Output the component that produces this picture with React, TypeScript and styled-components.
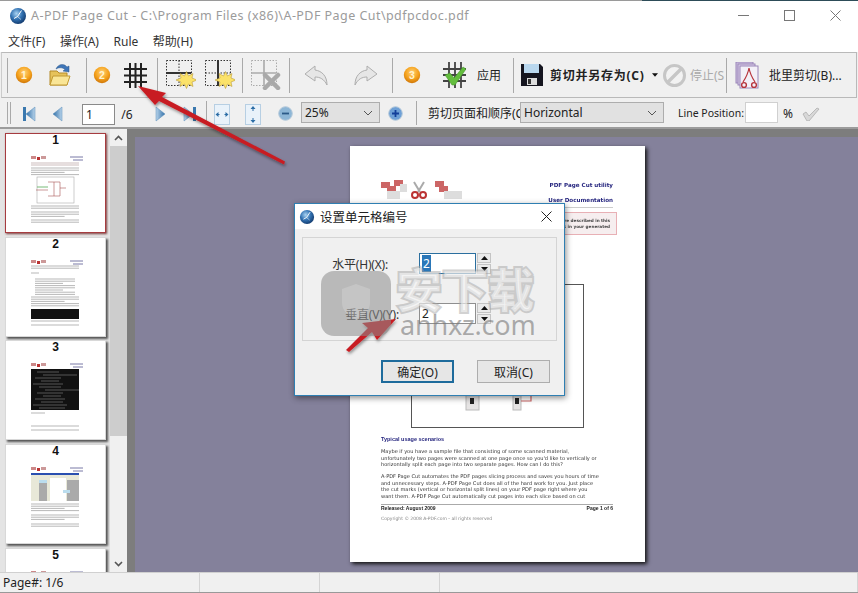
import React from "react";
import styled, { createGlobalStyle } from "styled-components";

const Global = createGlobalStyle`
  html, body { margin: 0; padding: 0; width: 858px; height: 593px; overflow: hidden; background: #fff; }
  * { box-sizing: border-box; }
  #root { width: 858px; height: 593px; }
`;
const UI = `"Noto Sans", "Noto Sans CJK SC", sans-serif`;
const Window = styled.div`
  position: relative; width: 858px; height: 593px; display: flex; flex-direction: column;
  background: #f0f0f0; font-family: ${UI}; color: #222; overflow: hidden;
  border-top: 1px solid #9a9a9a; border-image: linear-gradient(to right, #9a9a9a 642px, #2d4c58 642px) 1;
`;
const TitleBar = styled.div`
  height: 29px; flex: none; background: #fff; display: flex; align-items: center; padding-left: 9px;
`;
const Title = styled.div`
  margin-left: 4px; font-size: 12.5px; letter-spacing: 0.45px; color: #9b9b9b; white-space: nowrap; flex: 1;
`;
const WinButton = styled.div`
  width: 46px; height: 29px; display: flex; align-items: center; justify-content: center; flex: none;
`;
const MenuBar = styled.div`
  height: 22px; flex: none; background: #fff; display: flex; align-items: center; padding-left: 8px; gap: 14.6px;
  font-size: 12px; color: #333;
`;
const MainBar = styled.div`
  height: 46px; flex: none; margin: 0 1px 0 1px; background: #f0f0f0; border: 1px solid #b9b9b9; border-left-color: #ccc;
  display: flex; align-items: center; padding-left: 5px;
`;
const NavBar = styled.div`
  height: 31px; flex: none; background: #f0f0f0; border-bottom: 2px solid #9c9c9c; display: flex; align-items: center; padding-left: 7px;
`;
const Sep = styled.div<{ $h?: number }>`
  width: 1px; height: ${p => p.$h ?? 35}px; background: #a9a9a9; flex: none;
`;
const Slot = styled.div<{ $w: number; $start?: boolean; $drop?: number }>`
  width: ${p => p.$w}px; flex: none; display: flex; align-items: center; white-space: nowrap; overflow: hidden;
  justify-content: ${p => (p.$start ? "flex-start" : "center")};
  margin-top: ${p => p.$drop ?? 0}px;
`;
const ToolText = styled.span<{ $bold?: boolean; $off?: boolean }>`
  font-size: 12px; font-weight: ${p => (p.$bold ? 700 : 400)}; color: ${p => (p.$off ? "#aaa" : "#222")};
  letter-spacing: ${p => (p.$bold ? "0.75px" : "0")};
`;
const PageInput = styled.div`
  width: 33px; height: 21px; margin-top: 3px; background: #fff; border: 1px solid #8a8a8a; font-size: 12px; line-height: 19px; padding-left: 3px; flex: none;
`;
const Combo = styled.div<{ $w: number }>`
  width: ${p => p.$w}px; height: 21px; background: #e1e1e1; border: 1px solid #adadad; display: flex; align-items: center;
  justify-content: space-between; padding: 0 6px 0 3px; font-size: 12px; flex: none; color: #222;
`;
const NavText = styled.span<{ $small?: boolean }>`
  font-size: ${p => (p.$small ? "10.5px" : "12px")}; color: #222; white-space: nowrap;
`;
const LineInput = styled.div`
  width: 33px; height: 21px; background: #fff; border: 1px solid #d0d0d0; flex: none;
`;
const Body = styled.div`
  flex: 1; min-height: 0; display: flex;
`;
const ThumbPanel = styled.div`
  width: 127px; flex: none; display: flex;
`;
const ThumbList = styled.div`
  width: 110px; flex: none; background: #e4e4e4; overflow: hidden; padding: 4px 0 0 5px; display: flex; flex-direction: column; gap: 3.7px;
`;
const ThumbCard = styled.div<{ $active?: boolean }>`
  width: 101px; height: 100px; flex: none; background: #fff; border: ${p => (p.$active ? "1px solid #a63c40" : "1px solid #d8d8d8")};
  box-shadow: ${p => (p.$active ? "1px 1px 2px #7a3b3b" : "2px 2px 2px #555")};
  display: flex; flex-direction: column; align-items: center;
`;
const ThumbNum = styled.div`
  font: 700 12px/13px "Liberation Sans", sans-serif; color: #111; height: 14px;
`;
const ScrollBar = styled.div`
  width: 17px; flex: none; background: #f0f0f0; display: flex; flex-direction: column; align-items: center; justify-content: space-between;
`;
const ScrollBtn = styled.div`
  height: 17px; width: 17px; display: flex; align-items: center; justify-content: center; flex: none;
`;
const ScrollTrack = styled.div`
  flex: 1; width: 17px; padding-bottom: 119px; display: flex;
`;
const ScrollThumb = styled.div`
  flex: 1; background: #cdcdcd;
`;
const CanvasFrame = styled.div`
  flex: 1; background: #7d7d7d; padding: 8px 0 0 8px; display: flex; min-width: 0;
`;
const Canvas = styled.div`
  flex: 1; background: #84819b; display: flex; justify-content: flex-start; padding: 9px 0 0 215px; overflow: hidden;
`;
const Page = styled.div`
  width: 295px; height: 416px; background: #fff; box-shadow: 2px 2px 4px #111; flex: none; padding: 32px 32px 0 31px;
  font-family: "DejaVu Sans", sans-serif; color: #444; filter: blur(0.3px);
`;
const PageHead = styled.div`
  display: flex; justify-content: space-between; height: 30px; border-bottom: 1px solid #ccc; align-items: flex-start;
`;
const HeadRight = styled.div`
  text-align: right; font-size: 5.6px; font-weight: 700; color: #26267f; line-height: 15px;
`;
const NoteBox = styled.div`
  margin: 4px -4px 0 0; height: 23px; border: 1px solid #e8b0b5; background: #f6eeef; font-size: 4.2px; font-weight: 700; line-height: 6px; padding: 5px 6px 0 4px; text-align: right;
`;
const Para = styled.p<{ $top?: number }>`
  margin: ${p => p.$top ?? 6}px 0 0; font-size: 5.05px; line-height: 6.4px; color: #333; white-space: nowrap;
`;
const DiagramBox = styled.div`
  width: 173px; height: 144px; margin: 11px 0 0 30px; border: 1px solid #555; display: flex; align-items: flex-end; justify-content: center;
`;
const SubHead = styled.div`
  margin-top: 7px; font: 700 5.5px/8px "Liberation Sans", sans-serif; color: #26267f;
`;
const PageFoot = styled.div`
  margin-top: 5px; border-top: 1px solid #aaa; display: flex; justify-content: space-between; font: 700 5px/7px "Liberation Sans", sans-serif; color: #222;
`;
const Copyright = styled.div`
  font-size: 4.5px; color: #888; line-height: 7px; margin-top: 3px;
`;
const StatusBar = styled.div`
  height: 21px; flex: none; background: #f0f0f0; border-top: 1px solid #d0d0d0; border-bottom: 1px solid #999; display: flex; font-size: 12px; color: #222; align-items: stretch;
`;
const StatusCell = styled.div<{ $w?: number }>`
  width: ${p => (p.$w ? `${p.$w}px` : "auto")}; flex: ${p => (p.$w ? "none" : 1)}; border-right: 1px solid #d4d4d4; padding-left: 3px; line-height: 19px; white-space: nowrap;
`;
const Dialog = styled.div`
  position: absolute; left: 294px; top: 202px; width: 271px; height: 193px; background: #f0f0f0; border: 1px solid #2f7fb2;
  box-shadow: 1px 2px 6px rgba(0,0,0,.45); display: flex; flex-direction: column;
`;
const DialogHead = styled.div`
  height: 25px; flex: none; background: #fff; display: flex; align-items: center; padding-left: 4px; font-size: 12.5px; color: #222; gap: 5px;
`;
const DialogTitle = styled.div`
  flex: 1;
`;
const DialogClose = styled.div`
  width: 30px; display: flex; justify-content: center; margin-right: 3px;
`;
const GroupBox = styled.div`
  margin: 8px 7px 0 7px; height: 104px; border: 1px solid #d4d4d4; padding-top: 15px; display: flex; flex-direction: column; gap: 29px;
`;
const FieldRow = styled.div`
  display: flex; align-items: center; height: 21px;
`;
const FieldLabel = styled.div<{ $w: number }>`
  width: ${p => p.$w}px; text-align: right; font-size: 12px; color: #333; flex: none; letter-spacing: -0.2px;
`;
const FieldInput = styled.div<{ $focus?: boolean; $gap: number }>`
  margin-left: ${p => p.$gap}px; width: 57px; height: 21px; background: #fff; border: 1px solid ${p => (p.$focus ? "#2b6f9f" : "#8f8f8f")};
  font-size: 12px; line-height: 19px; padding-left: 2px; flex: none;
`;
const Selected = styled.span`
  background: #2a77b8; color: #fff; display: inline-block; height: 17px; line-height: 17px; padding: 0 1px;
`;
const Spin = styled.div`
  margin-left: 1px; display: flex; flex-direction: column; gap: 1px; width: 14px;
`;
const SpinBtn = styled.div`
  height: 10px; background: #eaeaea; border: 1px solid #c4c4c4; display: flex; align-items: center; justify-content: center;
`;
const DialogFoot = styled.div`
  display: flex; gap: 23px; padding: 19px 0 0 86px;
`;
const DlgButton = styled.div<{ $primary?: boolean }>`
  width: 73px; height: 23px; background: #e6e6e6; border: ${p => (p.$primary ? "2px solid #1e6b9c" : "1px solid #adadad")};
  display: flex; align-items: center; justify-content: center; font-size: 12px; color: #222;
`;
const Overlay = styled.svg`
  position: absolute; left: 0; top: 0; pointer-events: none;
`;
const Watermark = styled.div`
  position: absolute; left: 396px; top: 258px; font: 700 46px/56px "Noto Sans CJK SC", sans-serif; color: rgba(246,246,246,.62);
  -webkit-text-stroke: 4px rgba(165,165,165,.5); paint-order: stroke fill; white-space: nowrap; pointer-events: none;
`;
const WatermarkSub = styled.div`
  position: absolute; left: 400px; top: 309px; font: 400 27px/30px "Noto Sans", sans-serif; letter-spacing: -0.2px; color: rgba(120,120,120,.6); white-space: nowrap; pointer-events: none;
`;

const Logo = ({ s = 18 }: { s?: number }) => (
  <svg width={s} height={s} viewBox="0 0 18 18">
    <defs><radialGradient id="lg" cx="40%" cy="35%" r="70%"><stop offset="0" stopColor="#a9d3f2" /><stop offset=".5" stopColor="#3474b4" /><stop offset="1" stopColor="#0f3568" /></radialGradient></defs>
    <circle cx="9" cy="9" r="8" fill="url(#lg)" />
    <path d="M12.500 3.500 L8.500 9.500 L5 11.500" stroke="#fff" strokeWidth="1" fill="none" />
    <path d="M8.500 9.500l3.500 3" stroke="#fff" strokeWidth=".6" fill="none" />
  </svg>
);
const Badge = ({ n, id }: { n: number; id: string }) => (
  <svg width="18" height="18" viewBox="0 0 18 18">
    <defs><radialGradient id={id} cx="50%" cy="35%" r="70%"><stop offset="0" stopColor="#ffd27a" /><stop offset=".55" stopColor="#f5a21d" /><stop offset="1" stopColor="#c96f05" /></radialGradient></defs>
    <circle cx="9" cy="9" r="8.2" fill={`url(#${id})`} />
    <text x="9" y="12.600" textAnchor="middle" fontSize="10.500" fontWeight="700" fill="#fff3d0" fontFamily="Liberation Sans">{n}</text>
  </svg>
);
const Folder = () => (
  <svg width="22" height="24" viewBox="0 0 22 24">
    <path d="M1 8h7l2 2h8v12H1z" fill="#e6c25a" stroke="#b58b28" />
    <path d="M1 22l3-9h17l-3 9z" fill="#f9e596" stroke="#c29a32" />
    <path d="M7 6C9 1 15 0 18 4l2-1v6l-6-1 2-1.500C14 4.500 10 4 7 6z" fill="#3f76b8" stroke="#2c5688" strokeWidth=".5" />
  </svg>
);
const GridIcon = ({ c = "#222" }: { c?: string }) => (
  <svg width="23" height="25" viewBox="0 0 23 25" stroke={c} strokeWidth="2">
    <path d="M6 0v25M11.500 0v25M17 0v25M0 6h23M0 12.500h23M0 19h23" />
  </svg>
);
const Star = ({ x, y }: { x: number; y: number }) => (
  <path transform={`translate(${x} ${y})`} d="M0-9l2 4.500 4.500-2.500-1 4.500 5 2-5 2 1 4.500-4.500-2.500-2 4.500-2-4.500-4.500 2.500 1-4.500-5-2 5-2-1-4.500 4.500 2.500z" fill="#fbe26a" stroke="#b08f24" strokeWidth=".5" />
);
const SplitIcon = ({ v }: { v?: boolean }) => (
  <svg width="30" height="30" viewBox="0 0 30 30">
    <rect x=".5" y=".5" width="25" height="25" fill="none" stroke="#333" strokeDasharray="1.500 1.500" />
    <path d="M13 .5v25M.5 13h25" stroke="#333" strokeDasharray="1.500 1.500" fill="none" />
    <path d={v ? "M13 0v26" : "M0 13h25"} stroke="#333" strokeWidth="2" />
    <Star x={20.500} y={20.500} />
  </svg>
);
const DeleteIcon = () => (
  <svg width="30" height="30" viewBox="0 0 30 30">
    <rect x=".5" y=".5" width="25" height="25" fill="none" stroke="#aaa" strokeDasharray="1.500 1.500" />
    <path d="M13 0v26M0 13h25" stroke="#aaa" strokeWidth="1.600" />
    <path d="M14 15l13 13M27 15L14 28" stroke="#a9a9a9" strokeWidth="4.500" strokeLinecap="round" />
  </svg>
);
const UndoIcon = ({ flip }: { flip?: boolean }) => (
  <svg width="25" height="21" viewBox="0 0 25 21" style={flip ? { transform: "scaleX(-1)" } : undefined}>
    <path d="M11 1L1 9l10 7v-4c5 0 9 2 12 8 0-9-5-14-12-15z" fill="#e6e6e6" stroke="#aeaeae" />
  </svg>
);
const ApplyIcon = () => (
  <svg width="23" height="26" viewBox="0 0 23 26">
    <path d="M6 0v26M12 0v26M18 0v26M0 7h23M0 13h23M0 19h23" stroke="#444" strokeWidth="1.800" />
    <path d="M2 13l5-2 4 5 9-11 3 2-11 16h-3z" fill="#63bd3d" stroke="#3d8f25" strokeWidth=".5" />
  </svg>
);
const SaveIcon = () => (
  <svg width="22" height="22" viewBox="0 0 22 22">
    <path d="M0 0h19l3 3v19H0z" fill="#15151f" />
    <rect x="3" y="0" width="15" height="9" fill="#b9d7ee" />
    <rect x="6" y="14" width="10" height="7" fill="#ddd" />
    <rect x="7" y="15" width="3" height="5" fill="#333" />
  </svg>
);
const StopIcon = () => (
  <svg width="23" height="23" viewBox="0 0 23 23">
    <circle cx="11.500" cy="11.500" r="10" fill="#f2f2f2" stroke="#c6c6c6" strokeWidth="3" />
    <path d="M5 18L18 5" stroke="#c6c6c6" strokeWidth="3.400" />
  </svg>
);
const BatchIcon = () => (
  <svg width="27" height="27" viewBox="0 0 27 27">
    <rect x="1" y="0" width="17" height="21" fill="#cdbfe0" stroke="#9a86b8" />
    <rect x="3" y="2" width="17" height="21" fill="#dcd0ea" stroke="#9a86b8" />
    <rect x="5" y="4" width="18" height="22" fill="#f3f0f8" stroke="#9a86b8" />
    <path d="M14 6c-1 6-4 11-6 14M14 6c1 6 4 11 6 14" stroke="#b7333b" strokeWidth="1.200" fill="none" />
    <circle cx="9" cy="23" r="2.400" fill="none" stroke="#b7333b" strokeWidth="1.400" />
    <circle cx="19" cy="23" r="2.400" fill="none" stroke="#b7333b" strokeWidth="1.400" />
  </svg>
);
const NavArrow = ({ dir, bar }: { dir: "l" | "r"; bar?: boolean }) => (
  <svg width="16" height="16" viewBox="0 0 16 16" style={dir === "r" ? { transform: "scaleX(-1)" } : undefined}>
    <defs><linearGradient id={`na${bar ? 1 : 0}`} x1="0" x2="1"><stop offset="0" stopColor="#2f6fa8" /><stop offset="1" stopColor="#b8d3ea" /></linearGradient></defs>
    {bar && <rect x="1" y="1" width="3" height="14" fill="#3a78ae" />}
    <path d="M13 1L4 8l9 7z" fill={`url(#na${bar ? 1 : 0})`} stroke="#5b8db8" strokeWidth=".5" />
  </svg>
);
const FitIcon = ({ v }: { v?: boolean }) => (
  <svg width="16" height="21" viewBox="0 0 16 21">
    <rect x=".5" y=".5" width="15" height="20" fill="#e9f2fa" stroke="#b7cfe3" />
    {v
      ? <path d="M8 2l-2.500 3h2v2h1V5h2zM8 19l-2.500-3h2v-2h1v2h2z" fill="#2c6da6" />
      : <path d="M1.500 10.500l3-2.500v2h1v1h-1v2zM14.500 10.500l-3-2.500v2h-1v1h1v2z" fill="#2c6da6" />}
  </svg>
);
const ZoomBtn = ({ plus }: { plus?: boolean }) => (
  <svg width="15" height="15" viewBox="0 0 15 15">
    <circle cx="7.500" cy="7.500" r="6.800" fill={plus ? "#6ea0d6" : "#8db6d6"} stroke="#b5c9da" />
    <path d={plus ? "M4 7.500h7M7.500 4v7" : "M4 7.500h7"} stroke={plus ? "#123f9a" : "#2c5a88"} strokeWidth="1.800" />
  </svg>
);
const Chevron = () => (
  <svg width="10" height="6" viewBox="0 0 10 6"><path d="M1 1l4 4 4-4" fill="none" stroke="#555" /></svg>
);
const ScrollChevron = ({ up }: { up?: boolean }) => (
  <svg width="9" height="6" viewBox="0 0 9 6"><path d={up ? "M1 5l3.500-3.500L8 5" : "M1 1l3.500 3.500L8 1"} fill="none" stroke="#555" strokeWidth="1.600" /></svg>
);
const Tri = ({ up }: { up?: boolean }) => (
  <svg width="7" height="4" viewBox="0 0 7 4"><path d={up ? "M0 4l3.500-4L7 4z" : "M0 0l3.500 4L7 0z"} fill="#111" /></svg>
);
const Check = () => (
  <svg width="18" height="14" viewBox="0 0 18 14"><path d="M1 7l3-2 3 4 8-8 2 1-10 12h-2z" fill="#d8d8d8" stroke="#a8a8a8" strokeWidth=".7" /></svg>
);
const Lines = ({ y, n, x = 16, w = 48 }: { y: number; n: number; x?: number; w?: number }) => (
  <g stroke="#9a9a9a" strokeWidth=".7">
    {Array.from({ length: n }, (_, i) => <path key={i} d={`M${x} ${y + i * 2.2}h${i % 3 === 2 ? w * 0.7 : w}`} />)}
  </g>
);
const ThumbArt = ({ k }: { k: number }) => (
  <svg width="99" height="84" viewBox="0 0 99 84">
    <g transform="translate(9 1)">
      <rect x="16" y="7" width="5" height="3" fill="#c88" /><rect x="22" y="8" width="3" height="3" fill="#b33" /><rect x="26" y="7" width="5" height="3" fill="#c99" />
      <path d="M55 8h13M58 11h10" stroke="#55558f" strokeWidth=".8" />
      {k === 1 && <>
        <rect x="16" y="13" width="48" height="4" fill="#e6dede" /><Lines y={19} n={4} />
        <rect x="22" y="28" width="37" height="26" fill="none" stroke="#aaa" strokeWidth=".6" />
        <path d="M33 33h12v14H33M39 33v14M45 39h6M21 41h12" stroke="#a55" strokeWidth=".6" fill="none" />
        <path d="M22 38h11" stroke="#5a5" strokeWidth=".8" /><Lines y={57} n={2} /><Lines y={63} n={3} /><Lines y={71} n={2} />
      </>}
      {k === 2 && <>
        <Lines y={13} n={2} /><Lines y={20} n={1} w={8} /><Lines y={26} n={8} x={20} w={40} /><Lines y={44} n={5} />
        <rect x="16" y="56" width="48" height="10" fill="#111" /><Lines y={68} n={1} /><Lines y={72} n={1} />
      </>}
      {k === 3 && <>
        <rect x="16" y="13" width="48" height="41" fill="#111" /><g stroke="#888" strokeWidth=".6">{[16,19,22,25,28,31,34,37,40,43,46,49,52].map(y => <path key={y} d={`M${18 + (y % 7) * 2} ${y}h${18 + (y % 5) * 4}`} />)}</g>
        <Lines y={57} n={1} w={14} /><Lines y={70} n={1} /><Lines y={74} n={1} />
      </>}
      {k === 4 && <>
        <rect x="16" y="13" width="48" height="2" fill="#2a4fb0" /><rect x="16" y="15" width="48" height="26" fill="#e8e8d8" />
        <rect x="24" y="20" width="8" height="21" fill="#aaa" /><rect x="35" y="18" width="16" height="23" fill="#fff" /><rect x="52" y="20" width="12" height="21" fill="#aaa" />
        <rect x="24" y="20" width="8" height="3" fill="#bde" /><rect x="48" y="30" width="7" height="3" fill="#bde" />
        <Lines y={44} n={4} /><Lines y={55} n={3} /><Lines y={64} n={2} />
      </>}
    </g>
  </svg>
);
const Thumb = ({ n }: { n: number }) => (
  <ThumbCard $active={n === 1}>
    <ThumbNum>{n}</ThumbNum>
    <ThumbArt k={n} />
  </ThumbCard>
);
const DocLogo = () => (
  <svg width="84" height="22" viewBox="0 0 84 22">
    <rect x="0" y="4" width="9" height="6" fill="#c66" /><rect x="6" y="8" width="9" height="6" fill="#c66" /><rect x="13" y="2" width="9" height="6" fill="#c66" />
    <rect x="6" y="13" width="13" height="8" fill="#ddd" /><rect x="19" y="6" width="7" height="8" fill="#ddd" />
    <path d="M33 4l6 10M43 4l-6 10" stroke="#aaa" strokeWidth="2" /><circle cx="34" cy="17" r="3" fill="none" stroke="#b33" strokeWidth="2" /><circle cx="42" cy="17" r="3" fill="none" stroke="#b33" strokeWidth="2" />
    <rect x="54" y="3" width="9" height="6" fill="#c66" /><rect x="58" y="8" width="9" height="6" fill="#c66" /><rect x="63" y="13" width="18" height="8" fill="#ddd" />
  </svg>
);
const DiagramArt = () => (
  <svg width="171" height="34" viewBox="0 0 171 34">
    <rect x="54" y="0" width="13" height="17" fill="#e6e4e4" stroke="#bbb" /><rect x="58" y="5" width="4" height="6" fill="#222" />
    <rect x="101" y="0" width="8" height="17" fill="#e6e4e4" stroke="#bbb" /><rect x="103" y="5" width="4" height="6" fill="#222" />
    <path d="M109 8h10V0" stroke="#c66" strokeWidth="1.200" fill="none" />
  </svg>
);

export default function App() {
  return (
    <Window>
      <Global />
      <TitleBar>
        <Logo />
        <Title>A-PDF Page Cut - C:\Program Files (x86)\A-PDF Page Cut\pdfpcdoc.pdf</Title>
        <WinButton><svg width="11" height="11"><path d="M0 5.500h11" stroke="#777" /></svg></WinButton>
        <WinButton><svg width="11" height="11"><rect x=".5" y=".5" width="10" height="10" fill="none" stroke="#777" /></svg></WinButton>
        <WinButton><svg width="11" height="11"><path d="M.5 .5l10 10M10.500 .5l-10 10" stroke="#777" /></svg></WinButton>
      </TitleBar>
      <MenuBar><span>文件(F)</span><span>操作(A)</span><span>Rule</span><span>帮助(H)</span></MenuBar>
      <MainBar>
        <Sep />
        <Slot $w={32}><Badge n={1} id="b1" /></Slot>
        <Slot $w={40}><Folder /></Slot>
        <Slot $w={6} />
        <Sep />
        <Slot $w={30}><Badge n={2} id="b2" /></Slot>
        <Slot $w={36}><GridIcon /></Slot>
        <Slot $w={4} />
        <Sep />
        <Slot $w={46}><SplitIcon /></Slot>
        <Slot $w={31}><SplitIcon v /></Slot>
        <Slot $w={7} />
        <Sep />
        <Slot $w={46}><DeleteIcon /></Slot>
        <Sep />
        <Slot $w={52}><UndoIcon /></Slot>
        <Slot $w={46}><UndoIcon flip /></Slot>
        <Slot $w={4} />
        <Sep />
        <Slot $w={38}><Badge n={3} id="b3" /></Slot>
        <Slot $w={46}><ApplyIcon /></Slot>
        <Slot $w={36} $start><ToolText>应用</ToolText></Slot>
        <Sep />
        <Slot $w={36}><SaveIcon /></Slot>
        <Slot $w={102} $start><ToolText $bold>剪切并另存为(C)</ToolText></Slot>
        <Slot $w={6}><Tri /></Slot>
        <Slot $w={32}><StopIcon /></Slot>
        <Slot $w={36} $start><ToolText $off>停止(S</ToolText></Slot>
        <Sep />
        <Slot $w={42}><BatchIcon /></Slot>
        <Slot $w={80} $start><ToolText>批里剪切(B)...</ToolText></Slot>
      </MainBar>
      <NavBar>
        <Sep $h={22} />
        <Slot $w={2} />
        <Sep $h={22} />
        <Slot $w={38} $drop={3}><NavArrow dir="l" bar /></Slot>
        <Slot $w={16} $drop={3}><NavArrow dir="l" /></Slot>
        <Slot $w={17} />
        <PageInput>1</PageInput>
        <Slot $w={30} $start $drop={3}><NavText>&nbsp;&nbsp;/6</NavText></Slot>
        <Slot $w={32} $drop={3}><NavArrow dir="r" /></Slot>
        <Slot $w={24} $drop={3}><NavArrow dir="r" bar /></Slot>
        <Slot $w={5} />
        <Sep $h={24} />
        <Slot $w={30} $drop={3}><FitIcon /></Slot>
        <Slot $w={32} $drop={3}><FitIcon v /></Slot>
        <Slot $w={32} $drop={1}><ZoomBtn /></Slot>
        <Combo $w={79}><span>25%</span><Chevron /></Combo>
        <Slot $w={30} $drop={1}><ZoomBtn plus /></Slot>
        <Slot $w={6} />
        <Sep $h={24} />
        <Slot $w={11} />
        <Slot $w={92} $start $drop={1}><NavText>剪切页面和顺序(C</NavText></Slot>
        <Combo $w={144}><span>Horizontal</span><Chevron /></Combo>
        <Slot $w={14} />
        <Slot $w={67} $start><NavText $small>Line Position:</NavText></Slot>
        <LineInput />
        <Slot $w={20} $drop={2}><NavText>%</NavText></Slot>
        <Slot $w={26} $drop={2}><Check /></Slot>
      </NavBar>
      <Body>
        <ThumbPanel>
          <ThumbList>{[1, 2, 3, 4, 5].map(n => <Thumb key={n} n={n} />)}</ThumbList>
          <ScrollBar>
            <ScrollBtn><ScrollChevron up /></ScrollBtn>
            <ScrollTrack><ScrollThumb /></ScrollTrack>
            <ScrollBtn><ScrollChevron /></ScrollBtn>
          </ScrollBar>
        </ThumbPanel>
        <CanvasFrame>
          <Canvas>
            <Page>
              <PageHead>
                <DocLogo />
                <HeadRight>PDF Page Cut utility<br />User Documentation</HeadRight>
              </PageHead>
              <NoteBox>Some of the features that are described in this<br />document may not work in your generated</NoteBox>
              <Para $top={19}>A-PDF Page Cut is a simple and lightweight utility that lets you cut or<br />split pages of PDF documents with horizontal and vertical cut marks<br />that are placed on the page quickly and conveniently</Para>
              <DiagramBox><DiagramArt /></DiagramBox>
              <SubHead>Typical usage scenarios</SubHead>
              <Para $top={5}>Maybe if you have a sample file that consisting of some scanned material,<br />unfortunately two pages were scanned at one page once so you'd like to vertically or<br />horizontally split each page into two separate pages. How can I do this?</Para>
              <Para>A-PDF Page Cut automates the PDF pages slicing process and saves you hours of time<br />and unnecessary steps. A-PDF Page Cut does all of the hard work for you. Just place<br />the cut marks (vertical or horizontal split lines) on your PDF page right where you<br />want them. A-PDF Page Cut automatically cut pages into each slice based on cut</Para>
              <PageFoot><span>Released: August 2009</span><span>Page 1 of 6</span></PageFoot>
              <Copyright>Copyright © 2008 A-PDF.com - all rights reserved</Copyright>
            </Page>
          </Canvas>
        </CanvasFrame>
      </Body>
      <StatusBar>
        <StatusCell $w={200}>Page#: 1/6</StatusCell>
        <StatusCell $w={120} />
        <StatusCell $w={120} />
        <StatusCell />
      </StatusBar>
      <Dialog>
        <DialogHead>
          <Logo s={16} />
          <DialogTitle>设置单元格编号</DialogTitle>
          <DialogClose><svg width="11" height="11"><path d="M.5 .5l10 10M10.500 .5l-10 10" stroke="#222" /></svg></DialogClose>
        </DialogHead>
        <GroupBox>
          <FieldRow>
            <FieldLabel $w={85}>水平(H)(X):</FieldLabel>
            <FieldInput $focus $gap={31}><Selected>2</Selected></FieldInput>
            <Spin><SpinBtn><Tri up /></SpinBtn><SpinBtn><Tri /></SpinBtn></Spin>
          </FieldRow>
          <FieldRow>
            <FieldLabel $w={96}>垂直(V)(Y):</FieldLabel>
            <FieldInput $gap={20}>2</FieldInput>
            <Spin><SpinBtn><Tri up /></SpinBtn><SpinBtn><Tri /></SpinBtn></Spin>
          </FieldRow>
        </GroupBox>
        <DialogFoot>
          <DlgButton $primary>确定(O)</DlgButton>
          <DlgButton>取消(C)</DlgButton>
        </DialogFoot>
      </Dialog>
      <Overlay width="858" height="593" viewBox="0 0 858 593">
        <defs>
          <filter id="as" x="-20%" y="-20%" width="140%" height="140%"><feDropShadow dx="1" dy="2" stdDeviation="1.500" floodColor="#000" floodOpacity=".4" /></filter>
        </defs>
        <path d="M138 85L166 92L162 96L285 160.500L284 163.500L159 100L155 104z" fill="#c81c22" filter="url(#as)" />
        <path d="M396 318L377 339L372 331L349 351L346 349L368 327L362 322z" fill="#c81c22" filter="url(#as)" />
        <rect x="321" y="270" width="70" height="65" rx="13" fill="#8c8c8c" fillOpacity=".55" />
        <path d="M356 283l14 5v14c0 8-7 13-14 16-7-3-14-8-14-16v-14z" fill="#fff" fillOpacity=".18" />
      </Overlay>
      <Watermark>安下载</Watermark>
      <WatermarkSub>anhxz.com</WatermarkSub>
    </Window>
  );
}
